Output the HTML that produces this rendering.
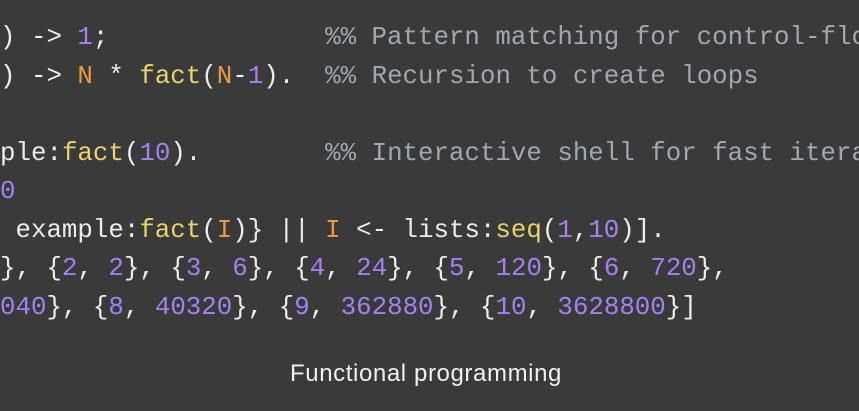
<!DOCTYPE html>
<html><head><meta charset="utf-8"><style>
html,body{margin:0;padding:0;width:859px;height:411px;overflow:hidden;background:#3a3a3a;}
pre{position:absolute;left:0;top:19px;width:859px;overflow:hidden;margin:0;font-family:"Liberation Mono","DejaVu Sans Mono",monospace;font-size:25.8px;line-height:38.5px;color:#ececec;white-space:pre;}
.n{color:#a382f0}.f{color:#e7d36c}.v{color:#eb9a3e}.c{color:#a3a7ab}
.cap{position:absolute;left:0;width:852px;text-align:center;top:360px;font-family:"Liberation Sans",sans-serif;font-size:24px;letter-spacing:0.6px;color:#f0f0f0;}
</style></head><body>
<pre>) -&gt; <span class="n">1</span>;              <span class="c">%% Pattern matching for control-flow</span>
) -&gt; <span class="v">N</span> * <span class="f">fact</span>(<span class="v">N</span>-<span class="n">1</span>).  <span class="c">%% Recursion to create loops</span>

ple:<span class="f">fact</span>(<span class="n">10</span>).        <span class="c">%% Interactive shell for fast iteration</span>
<span class="n">0</span>
 example:<span class="f">fact</span>(<span class="v">I</span>)} || <span class="v">I</span> &lt;- lists:<span class="f">seq</span>(<span class="n">1</span>,<span class="n">10</span>)].
}, {<span class="n">2</span>, <span class="n">2</span>}, {<span class="n">3</span>, <span class="n">6</span>}, {<span class="n">4</span>, <span class="n">24</span>}, {<span class="n">5</span>, <span class="n">120</span>}, {<span class="n">6</span>, <span class="n">720</span>},
<span class="n">040</span>}, {<span class="n">8</span>, <span class="n">40320</span>}, {<span class="n">9</span>, <span class="n">362880</span>}, {<span class="n">10</span>, <span class="n">3628800</span>}]</pre>
<div class="cap">Functional programming</div>
</body></html>
